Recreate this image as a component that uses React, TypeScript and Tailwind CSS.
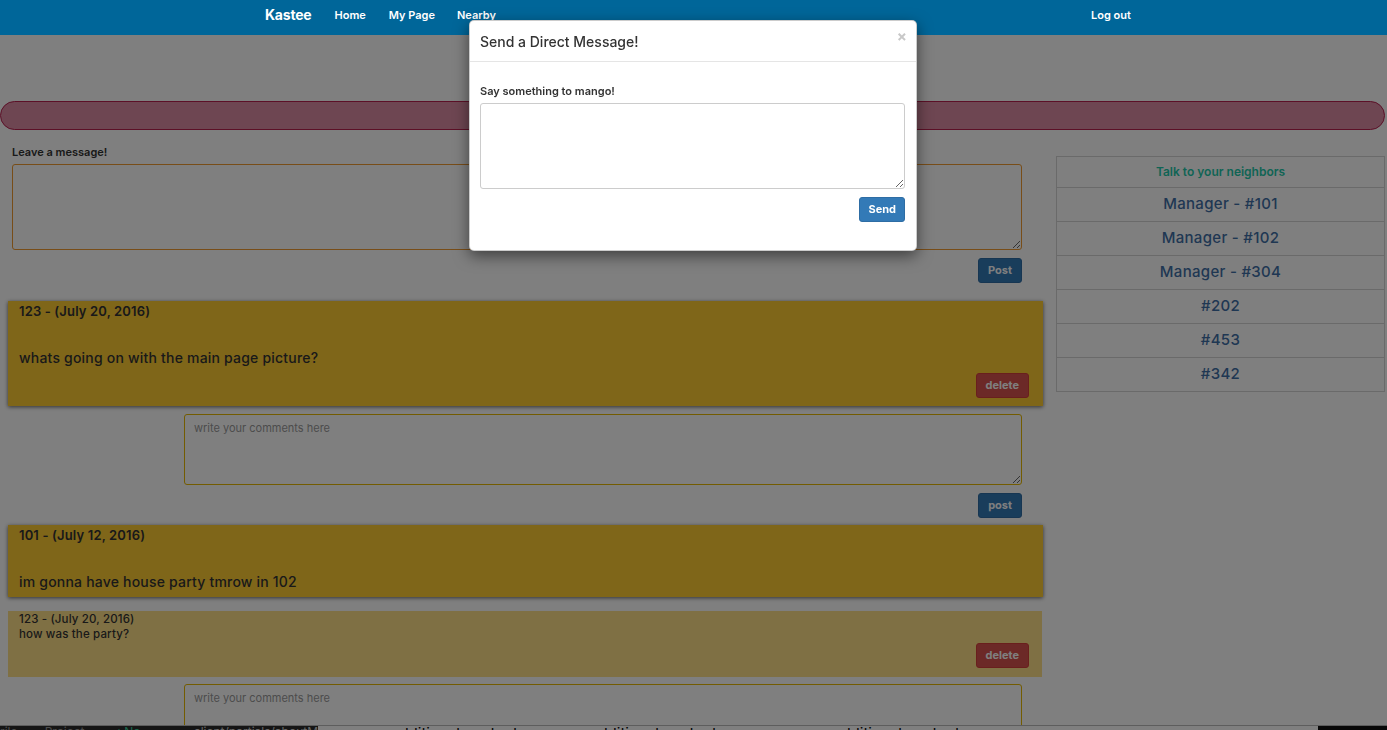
import React from 'react';

const font = { fontFamily: 'Inter, "Noto Sans", sans-serif' };

const neighbors = ['Manager - #101', 'Manager - #102', 'Manager - #304', '#202', '#453', '#342'];

function Navbar() {
  return (
    <nav className="relative z-50 h-[35px] w-full bg-[#006699] text-white">
      <div className="flex items-start pt-[7px]">
        <span className="ml-[265px] text-[14px] font-bold leading-[16px] tracking-[-0.2px]">Kastee</span>
        <span className="ml-[23px] pt-[1px] text-[11px] font-semibold leading-[14px]">Home</span>
        <span className="ml-[23px] pt-[1px] text-[11px] font-semibold leading-[14px]">My Page</span>
        <span className="ml-[22px] pt-[1px] text-[11px] font-semibold leading-[14px]">Nearby</span>
        <span className="ml-[595px] pt-[1px] text-[11px] font-semibold leading-[14px]">Log out</span>
      </div>
    </nav>
  );
}

function BlueBtn({ label, px = 'px-[9px]' }: { label: string; px?: string }) {
  return (
    <button className={`h-[25px] rounded-[3px] border border-[#2e6da4] bg-[#337ab7] ${px} text-[11px] font-bold text-white`}>
      {label}
    </button>
  );
}

function DeleteBtn() {
  return (
    <button className="h-[25px] rounded-[3px] border border-[#d43f3a] bg-[#d9534f] px-[9px] text-[11px] font-bold text-white">
      delete
    </button>
  );
}

function CommentBox() {
  return (
    <>
      <textarea
        placeholder="write your comments here"
        className="ml-[176px] mt-[8px] block h-[71px] w-[838px] resize-y rounded-[3px] border border-[#e6b800] bg-white px-[9px] py-[5px] text-[11px] placeholder:text-[#999]"
      />
      <div className="mt-[8px] flex w-[1014px] justify-end">
        <BlueBtn label="post" />
      </div>
    </>
  );
}

export default function App() {
  return (
    <div className="min-h-screen bg-white text-[#333]" style={font}>
      <Navbar />

      {/* pink banner */}
      <div className="mr-[2px] mt-[66px] h-[29px] rounded-full border border-[#b8204f] bg-[#dc8ca4]" />

      <div className="flex">
        {/* left column */}
        <div className="w-[1050px] pl-[8px]">
          <div className="mt-[15px] pl-[4px] text-[11px] font-semibold leading-[15px]">Leave a message!</div>
          <textarea className="ml-[4px] mt-[4px] block h-[86px] w-[1010px] resize-y rounded-[3px] border border-[#f09a30] bg-white" />
          <div className="mt-[8px] flex w-[1014px] justify-end">
            <BlueBtn label="Post" />
          </div>

          {/* post 1 */}
          <div className="mt-[18px] w-[1035px] bg-[#ffcc33] pb-[8px] pl-[11px] pr-[14px] pt-[1px] shadow-[0_1px_4px_rgba(0,0,0,0.6)]">
            <div className="text-[13px] font-semibold leading-[18px] tracking-[0.15px]">123 - (July 20, 2016)</div>
            <div className="mt-[28px] text-[14px] font-medium leading-[20px] tracking-[0.2px]">
              whats going on with the main page picture?
            </div>
            <div className="mt-[5px] flex justify-end">
              <DeleteBtn />
            </div>
          </div>
          <CommentBox />

          {/* post 2 */}
          <div className="mt-[7px] w-[1035px] bg-[#ffcc33] pb-[5px] pl-[11px] pr-[14px] pt-[1px] shadow-[0_1px_4px_rgba(0,0,0,0.6)]">
            <div className="text-[13px] font-semibold leading-[18px] tracking-[0.15px]">101 - (July 12, 2016)</div>
            <div className="mt-[28px] text-[14px] font-medium leading-[20px] tracking-[0.2px]">
              im gonna have house party tmrow in 102
            </div>
          </div>

          {/* comment */}
          <div className="mt-[14px] w-[1034px] bg-[#ffe088] pb-[9px] pl-[11px] pr-[13px] pt-[1px]">
            <div className="text-[11.5px] font-medium leading-[15px] tracking-[0.15px]">123 - (July 20, 2016)</div>
            <div className="text-[11.5px] font-medium leading-[15px] tracking-[0.15px]">how was the party?</div>
            <div className="mt-[1px] flex justify-end">
              <DeleteBtn />
            </div>
          </div>
          <textarea
            placeholder="write your comments here"
            className="ml-[176px] mt-[7px] block h-[71px] w-[838px] resize-y rounded-[3px] border border-[#e6b800] bg-white px-[9px] py-[5px] text-[11px] placeholder:text-[#999]"
          />
          <div className="h-[60px]" />
        </div>

        {/* right sidebar */}
        <div className="ml-[6px] mt-[26px] w-[329px] self-start border border-[#d4d4d4]">
          <div className="flex h-[30px] items-center justify-center text-[12px] font-semibold text-[#1fc9aa]">
            Talk to your neighbors
          </div>
          {neighbors.map((n) => (
            <div
              key={n}
              className="flex h-[34px] items-center justify-center border-t border-[#d4d4d4] text-[15px] font-medium tracking-[0.3px] text-[#3f6fa6]"
            >
              {n}
            </div>
          ))}
        </div>
      </div>

      {/* screenshot strip at the very bottom */}
      <div className="fixed bottom-0 left-0 right-0 z-30 flex h-[5px] overflow-hidden border-t border-[#bbb] bg-white">
        <div className="flex w-[318px] items-start gap-[18px] bg-[#2a2a2a] text-[12px] leading-[12px] text-[#999]">
          <span>rile 0</span>
          <span>Project 0</span>
          <span className="text-[#3c9]">✓ No Issues</span>
          <span className="text-[#ccc]">client/partials/aboutM</span>
        </div>
        <div className="ml-[30px] w-[242px] text-[15px] leading-[15px] text-black">some additional content.</div>
        <div className="w-[243px] text-[15px] leading-[15px] text-black">additional content.</div>
        <div className="w-[485px] text-[15px] leading-[15px] text-black">additional content.</div>
        <div className="flex-1 bg-[#111]" />
      </div>

      {/* backdrop */}
      <div className="fixed inset-0 z-40 bg-black/50" />

      {/* modal */}
      <div className="fixed left-[469px] top-[20px] z-[60] w-[448px] rounded-[5px] border border-black/20 bg-white shadow-[0_5px_15px_rgba(0,0,0,0.5)]">
        <div className="flex h-[41px] items-center justify-between border-b border-[#e5e5e5] pl-[10px] pr-[9px]">
          <span className="text-[14px] font-medium text-[#333]">Send a Direct Message!</span>
          <span className="-mt-[10px] text-[15px] font-bold leading-none text-[#c8c8c8]">×</span>
        </div>
        <div className="pb-[28px] pl-[10px] pr-[11px] pt-[22px]">
          <div className="text-[11px] font-semibold leading-[15px] text-[#333]">Say something to mango!</div>
          <textarea className="mt-[4px] block h-[86px] w-full resize-y rounded-[3px] border border-[#ccc] bg-white" />
          <div className="mt-[8px] flex justify-end">
            <BlueBtn label="Send" px="px-[8px]" />
          </div>
        </div>
      </div>
    </div>
  );
}
